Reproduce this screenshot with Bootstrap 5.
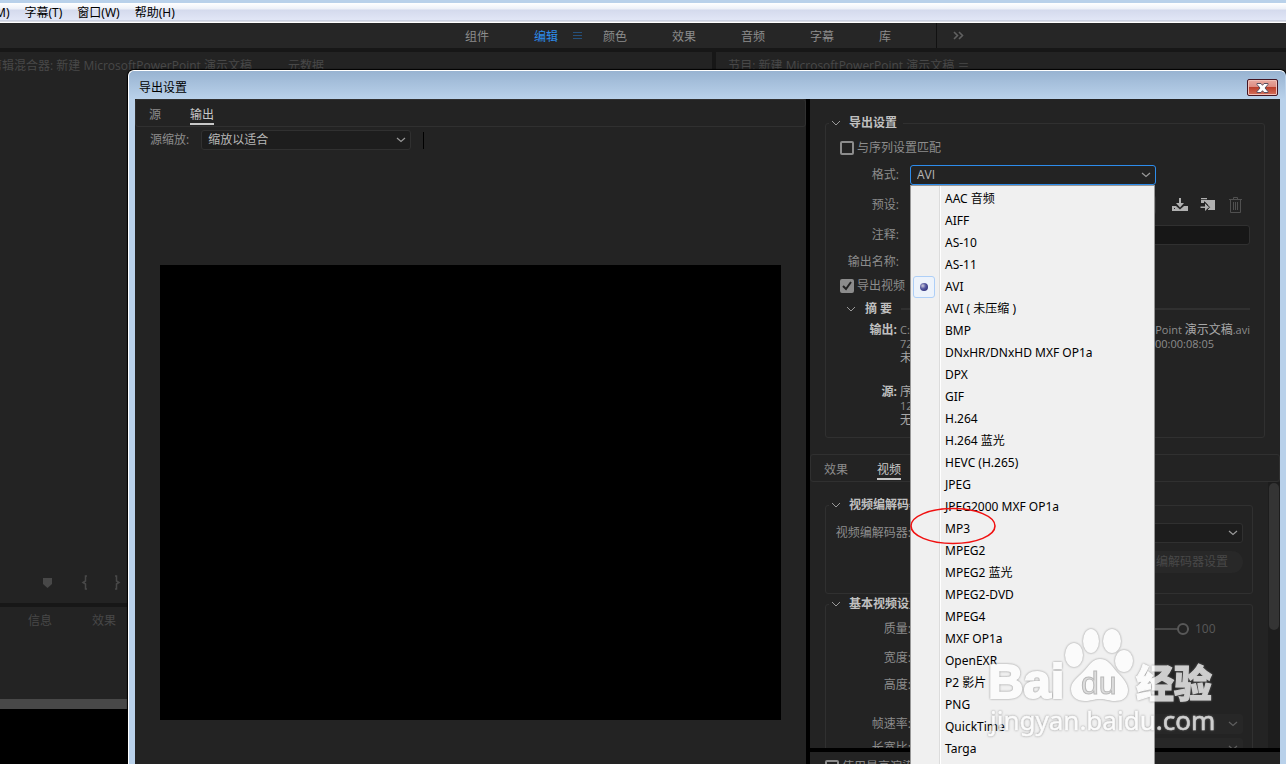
<!DOCTYPE html>
<html lang="zh-CN">
<head>
<meta charset="utf-8">
<meta name="viewport" content="width=device-width, initial-scale=1">
<title>导出设置</title>
<link rel="stylesheet" href="https://cdn.jsdelivr.net/npm/bootstrap@5.3.0/dist/css/bootstrap.min.css">
<style>
  body { background:#171717; color:#8c8c8c; font:12px/20px "Open Sans","Noto Sans CJK SC",sans-serif; height:100vh; overflow:hidden; position:relative; }
  a { color:inherit; text-decoration:none; }
  .sysedge { height:3px; background:#b9d1ea; }
  .menubar { height:20px; background:linear-gradient(#fff 0,#edf0f8 6px,#d4daed 7px,#e1e6f6 17px,#b6bccc 18px,#fff 19px); color:#000; overflow:hidden; font-family:"Noto Sans","Noto Sans CJK SC",sans-serif; }
  .menubar a { margin-right:15px; line-height:20px; }
  .menubar a:first-child { margin-left:-5px; }
  .spaces { height:25px; background:#262626; margin-bottom:4px; }
  .spaces nav { margin-left:36%; padding-left:2px; line-height:27px; gap:45px; }
  .spaces .burger { left:39px; top:8px; }
  .spaces .current { color:#2d8ceb; }
  .spaces .more { border-left:1px solid #111; padding-left:16px; height:25px; }
  .pane { background:#232323; }
  .dim { color:#484848; }
  .uppertabs { padding-top:4px; gap:36px; margin-left:-10px; }
  .lowerpane { height:92px; margin-top:4px; }
  .strip { height:10px; background:#484848; }
  .void { height:55px; background:#000; }
  .export { left:128px; right:0; top:70px; bottom:0; border:1px solid #fff; border-bottom:0; border-right-color:#b9d1ea; border-radius:6px 6px 0 0; background:#b9d1ea linear-gradient(#98b3d1,#b9d1ea 28px); padding:0 5px 0 6px; box-shadow:0 0 1px 1px #000; }
  .caption { height:28px; color:#000; padding:5px 2px 0 4px; }
  .closebox { width:31px; height:17px; border:1px solid #431523; border-radius:2px; background:linear-gradient(#e8aaa0,#dc8a80 48%,#bb402c 50%,#d4705c); box-shadow:inset 0 0 0 1px #f0c0b8; padding:0; }
  .tabrow { height:28px; border:1px solid #303030; border-radius:3px; padding-left:13px; gap:29px; }
  .tabrow a { line-height:24px; height:25px; margin-top:3px; }
  .tabrow .on { color:#c8c8c8; border-bottom:2px solid #c8c8c8; height:22px; }
  .scaling { height:26px; padding-left:15px; gap:12px; }
  .field { background-color:#1d1d1d; border:1px solid #303030; border-radius:3px; color:#b8b8b8; font-size:12px; line-height:18px; height:20px; padding:0 20px 0 6px; min-height:0;
    background-image:url("data:image/svg+xml,%3Csvg xmlns='http://www.w3.org/2000/svg' viewBox='0 0 10 6'%3E%3Cpath d='M1 1l4 3.5L9 1' fill='none' stroke='%23999' stroke-width='1.2'/%3E%3C/svg%3E"); background-size:10px 6px; background-position:right 4px center; background-repeat:no-repeat; }
  .field:disabled { background-color:#2c2c2c; border-color:#2c2c2c; opacity:.5; }
  input.field { background-image:none; background-color:#171717; }
  .wide { width:210px; }
  .divline { width:1px; height:17px; background:#000; }
  .canvas { margin:112px 25px 44px; background:#000; }
  .settings { width:474px; border-left:4px solid #000; }
  fieldset { border:1px solid #303030; border-radius:3px; padding:0 14px 0 0; margin:0 15px; }
  .general { margin-top:14px; }
  legend { float:none; width:auto; margin:0 0 0 3px; padding:0 6px 0 2px; font-size:12px; font-weight:700; line-height:20px; color:#c0c0c0; display:flex; align-items:center; gap:8px; }
  .r18 { height:18px; } .r24 { height:24px; } .r28 { height:28px; } .r30 { height:30px; } .r36 { height:36px; } .r27 { height:27px; }
  .lab { width:73px; text-align:right; flex:none; margin-right:11px; white-space:nowrap; }
  .lab.far { width:85px; margin-right:8px; }
  .tick { appearance:none; width:14px; height:14px; border:2px solid #8c8c8c; border-radius:2px; margin:0 3px 0 14px; flex:none; }
  .tick:checked { background:#8c8c8c url("data:image/svg+xml,%3Csvg xmlns='http://www.w3.org/2000/svg' viewBox='0 0 10 10'%3E%3Cpath d='M1 5l3 3 5-7' fill='none' stroke='%23222' stroke-width='2'/%3E%3C/svg%3E"); }
  .picker { width:246px; }
  .picker .field { background-color:#232323; border-color:#2d8ceb; }
  .picker .calm { border-color:#303030; }
  .formats { top:20px; left:0; width:245px; margin:0; padding:2px 0; background:#f0f0f0 linear-gradient(90deg,transparent 28px,#dcdcdc 28px,#dcdcdc 29px,#fff 29px,#fff 30px,transparent 30px); border:1px solid #979797; border-radius:0; font:12px "Noto Sans","Noto Sans CJK SC",sans-serif; }
  .formats button { height:22px; line-height:22px; padding:0 0 0 34px; color:#000; font-family:"DejaVu Sans Condensed","Noto Sans","Noto Sans CJK SC",sans-serif; font-family:"Noto Sans","Noto Sans CJK SC",sans-serif; }
  .radiobox { left:2px; top:0; width:22px; height:22px; border:1px solid #aecff7; border-radius:3px; background:#edf3fb; }
  .radiobox::after { content:""; position:absolute; left:6px; top:6px; width:8px; height:8px; border-radius:50%; background:radial-gradient(circle at 35% 35%,#ccd 0,#5558a0 40%,#1c1c66 100%); }
  .ring { left:-2px; top:-11px; }
  .tool { padding:0; border:0; background:none; line-height:0; }
  .tools { margin-left:15px; gap:10px; }
  .lines { line-height:14px; color:#8c8c8c; font-size:11px; margin-bottom:20px; }
  .lines .lab { width:71px; margin-right:3px; font-size:12px; font-weight:700; color:#c0c0c0; }
  .lines .tail { width:131px; }
  .lines b { font-weight:400; color:#a8a8a8; font-size:12px; }
  .lines:last-child { margin-bottom:10px; }
  .summary { font-weight:700; color:#c0c0c0; padding-left:20px; gap:9px; }
  .summary i { height:2px; background:#303030; }
  .lowerwrap { min-height:0; overflow:hidden; }
  .forms { padding-top:13px; }
  .forms fieldset { margin:0 15px; padding-right:9px; }
  .codecs { padding-bottom:18px; }
  .track { width:12px; background:#1d1d1d; padding:1px 1px 0; }
  .thumb { height:147px; border-radius:5px; background:#343434; }
  .pill { width:140px; height:22px; border:0; border-radius:11px; background:#282828; color:#484848; padding:0 15px 0 0; text-align:right; white-space:nowrap; }
  .quality { appearance:none; height:14px; background:linear-gradient(#484848,#484848) center/100% 2px no-repeat; min-width:0; flex:1; }
  .quality::-webkit-slider-thumb { appearance:none; width:12px; height:12px; border:2px solid #585858; border-radius:50%; background:#232323; }
  .reading { color:#585858; width:54px; padding-left:6px; }
  .foot { height:12px; border-top:4px solid #000; box-sizing:content-box; overflow:hidden; }
  .foot .tick { margin-left:15px; }
  .brand { right:60px; bottom:20px; z-index:1100; pointer-events:none; opacity:.78; filter:drop-shadow(0 0 1px #777); }
</style>
</head>
<body class="d-flex flex-column m-0">
<div class="sysedge flex-shrink-0"></div>
<nav class="menubar d-flex flex-shrink-0"><a href="#">M)</a><a href="#">字幕(T)</a><a href="#">窗口(W)</a><a href="#">帮助(H)</a></nav>
<header class="spaces flex-shrink-0">
  <nav class="d-flex">
    <a href="#">组件</a>
    <a href="#" class="current position-relative">编辑<svg class="burger position-absolute" width="9" height="9" stroke="#25507c"><path d="M0 1.500h9M0 4.500h9M0 7.500h9"/></svg></a>
    <a href="#">颜色</a><a href="#">效果</a><a href="#">音频</a><a href="#">字幕</a><a href="#">库</a>
    <a href="#" class="more" aria-label="更多"><svg class="d-block mt-2" width="11" height="9" fill="none" stroke="#606060" stroke-width="1.600"><path d="M1 1l3.500 3.500L1 8M6 1l3.500 3.500L6 8"/></svg></a>
  </nav>
</header>
<main class="d-flex flex-grow-1 gap-1">
  <section class="d-flex flex-column flex-grow-1">
    <div class="pane dim flex-grow-1 d-flex flex-column justify-content-between">
      <div class="uppertabs d-flex"><span>剪辑混合器: 新建 MicrosoftPowerPoint 演示文稿</span><span>元数据</span></div>
      <svg class="mb-1" width="127" height="26" fill="#484848"><path d="M43 5h9v6l-4.500 4L43 11z"/><path d="M87 3h-1.500v5L83 9.500l2.500 1.500v5H87M115 3h1.500v5l2.500 1.500-2.500 1.500v5H115" fill="none" stroke="#484848" stroke-width="1.500"/></svg>
    </div>
    <div class="pane lowerpane dim"><div class="d-flex ps-4 pt-1"><span class="ms-1 me-4">信息</span><span class="ms-3">效果</span></div></div>
    <div class="strip"></div><div class="void"></div>
  </section>
  <section class="pane dim px-2 pt-1" style="width:44.3%"><span class="ms-1">节目: 新建 MicrosoftPowerPoint 演示文稿</span> <span>＝</span></section>
</main>

<section class="export position-absolute d-flex flex-column" role="dialog" aria-labelledby="dlg">
  <div class="caption d-flex align-items-center flex-shrink-0"><span id="dlg" class="me-auto">导出设置</span>
    <button type="button" class="closebox d-flex align-items-center justify-content-center" aria-label="关闭"><svg width="13" height="10"><path d="M1 .5h4l1.500 1.800L8 .5h4v1L9 5l3 3.500v1H8L6.500 7.700 5 9.500H1v-1L4 5 1 1.500z" fill="#fff" stroke="#5a5060"/></svg></button>
  </div>
  <div class="d-flex flex-grow-1" style="min-height:0">
    <div class="pane d-flex flex-column flex-grow-1">
      <nav class="tabrow d-flex flex-shrink-0"><a href="#">源</a><a href="#" class="on">输出</a></nav>
      <div class="scaling d-flex align-items-center flex-shrink-0"><label for="scale">源缩放:</label>
        <select id="scale" class="form-select field wide"><option>缩放以适合</option></select><span class="divline"></span></div>
      <div class="canvas flex-grow-1"></div>
    </div>
    <div class="pane settings d-flex flex-column flex-shrink-0">
      <fieldset class="general flex-shrink-0">
        <legend><svg width="10" height="7" fill="none" stroke="#999"><path d="M1 1l4 4 4-4"/></svg>导出设置</legend>
        <div class="r30 d-flex align-items-center"><input class="tick" type="checkbox" id="match"><label for="match">与序列设置匹配</label></div>
        <div class="r24 d-flex align-items-center"><label class="lab" for="fmt">格式:</label>
          <div class="picker position-relative d-flex">
            <select id="fmt" class="form-select field"><option>AVI</option></select>
            <ul class="formats dropdown-menu show">
              <li><button type="button" class="dropdown-item">AAC 音频</button></li>
              <li><button type="button" class="dropdown-item">AIFF</button></li>
              <li><button type="button" class="dropdown-item">AS-10</button></li>
              <li><button type="button" class="dropdown-item">AS-11</button></li>
              <li class="position-relative"><span class="radiobox position-absolute"></span><button type="button" class="dropdown-item">AVI</button></li>
              <li><button type="button" class="dropdown-item">AVI ( 未压缩 )</button></li>
              <li><button type="button" class="dropdown-item">BMP</button></li>
              <li><button type="button" class="dropdown-item">DNxHR/DNxHD MXF OP1a</button></li>
              <li><button type="button" class="dropdown-item">DPX</button></li>
              <li><button type="button" class="dropdown-item">GIF</button></li>
              <li><button type="button" class="dropdown-item">H.264</button></li>
              <li><button type="button" class="dropdown-item">H.264 蓝光</button></li>
              <li><button type="button" class="dropdown-item">HEVC (H.265)</button></li>
              <li><button type="button" class="dropdown-item">JPEG</button></li>
              <li><button type="button" class="dropdown-item">JPEG2000 MXF OP1a</button></li>
              <li class="position-relative"><button type="button" class="dropdown-item">MP3</button><svg class="ring position-absolute" width="88" height="38"><ellipse cx="44" cy="19" rx="42" ry="17.500" fill="none" stroke="#f01010" stroke-width="1.600"/></svg></li>
              <li><button type="button" class="dropdown-item">MPEG2</button></li>
              <li><button type="button" class="dropdown-item">MPEG2 蓝光</button></li>
              <li><button type="button" class="dropdown-item">MPEG2-DVD</button></li>
              <li><button type="button" class="dropdown-item">MPEG4</button></li>
              <li><button type="button" class="dropdown-item">MXF OP1a</button></li>
              <li><button type="button" class="dropdown-item">OpenEXR</button></li>
              <li><button type="button" class="dropdown-item">P2 影片</button></li>
              <li><button type="button" class="dropdown-item">PNG</button></li>
              <li><button type="button" class="dropdown-item">QuickTime</button></li>
              <li><button type="button" class="dropdown-item">Targa</button></li>
              <li><button type="button" class="dropdown-item" aria-label="TIFF"></button></li>
            </ul>
          </div></div>
        <div class="r36 d-flex align-items-center"><label class="lab" for="preset">预设:</label>
          <div class="picker"><select id="preset" class="form-select field calm"><option></option></select></div>
          <div class="tools d-flex">
            <button type="button" class="tool" aria-label="保存预设"><svg width="18" height="16" fill="#b0b0b0"><path d="M8 1h2v5h3L9 10.500 5 6h3zM1 9h4l4 3.500L13 9h4v5H1z"/><path d="M3 11h1v1H3z" fill="#232323"/></svg></button>
            <button type="button" class="tool" aria-label="导入预设"><svg width="18" height="16" fill="#b0b0b0"><path d="M2 1h6v1.300H2zM2 3h14v10H9V8L5 4v2H2z"/><path d="M1.500 9.500h4.500V6L10 10.200 6 14v-3H1.500z" fill="#b0b0b0"/><path d="M5.500 5L10.500 10.200 8 13" fill="none" stroke="#232323"/></svg></button>
            <button type="button" class="tool" aria-label="删除预设" disabled><svg width="18" height="16" fill="none" stroke="#505050"><path d="M2 2.500h13M6.500 2V.5h4V2M3.500 3v12.500h10V3M6.500 5v8M8.500 5v8M10.500 5v8"/></svg></button>
          </div></div>
        <div class="r24 d-flex align-items-center"><label class="lab" for="note">注释:</label><input id="note" class="form-control field" type="text"></div>
        <div class="r30 d-flex align-items-center"><span class="lab">输出名称:</span></div>
        <div class="r18 d-flex align-items-center"><input class="tick" type="checkbox" id="vid" checked><label for="vid">导出视频</label></div>
        <div class="r28 summary d-flex align-items-center"><svg width="10" height="7" fill="none" stroke="#999"><path d="M1 1l4 4 4-4"/></svg>摘 要<i class="flex-grow-1"></i></div>
        <div class="lines d-flex"><span class="lab">输出:</span><div class="flex-grow-1">
          <div class="d-flex justify-content-between"><span>C:</span><span class="tail text-end">Point <b>演示文稿</b>.avi</span></div>
          <div class="d-flex justify-content-between"><span>72</span><span class="tail ps-4"><span class="ms-2 ps-1">00:00:08:05</span></span></div>
          <div><b>未</b></div></div></div>
        <div class="lines d-flex"><span class="lab">源:</span><div><div><b>序</b></div><div>12</div><div><b>无</b></div></div></div>
      </fieldset>
      <nav class="tabrow d-flex flex-shrink-0 mt-3"><a href="#">效果</a><a href="#" class="on">视频</a></nav>
      <div class="lowerwrap d-flex flex-grow-1">
        <div class="forms flex-grow-1">
          <fieldset>
            <legend><svg width="10" height="7" fill="none" stroke="#999"><path d="M1 1l4 4 4-4"/></svg>视频编解码器</legend>
            <div class="codecs">
              <div class="r36 d-flex align-items-center"><label class="lab far" for="codec">视频编解码器:</label><select id="codec" class="form-select field"><option></option></select></div>
              <div class="r24 d-flex justify-content-end"><button type="button" class="pill" disabled>编解码器设置</button></div>
            </div>
          </fieldset>
          <fieldset>
            <legend><svg width="10" height="7" fill="none" stroke="#999"><path d="M1 1l4 4 4-4"/></svg>基本视频设置</legend>
            <div class="r30 d-flex align-items-center"><label class="lab far" for="q">质量:</label><input id="q" class="quality" type="range" value="100"><span class="reading">100</span></div>
            <div class="r27 d-flex align-items-center"><span class="lab far">宽度:</span></div>
            <div class="r27 d-flex align-items-center"><span class="lab far">高度:</span></div>
            <div class="r27 d-flex align-items-center mt-2 pt-2"><label class="lab far" for="fps">帧速率:</label><select id="fps" class="form-select field" disabled><option></option></select></div>
            <div class="r30 d-flex align-items-center"><label class="lab far" for="ord">长宽比:</label><select id="ord" class="form-select field" disabled><option></option></select></div>
          </fieldset>
        </div>
        <div class="track"><div class="thumb"></div></div>
      </div>
      <div class="foot flex-shrink-0"><div class="r30 d-flex align-items-center"><input class="tick" type="checkbox" id="mrq"><label for="mrq">使用最高渲染质量</label></div></div>
    </div>
  </div>
</section>

<svg class="brand position-absolute" width="240" height="120" fill="#fff" aria-label="Baidu 经验">
  <text x="2" y="74" font-family="Liberation Sans" font-size="49" font-weight="700" stroke="#fff" stroke-width="2">Bai</text>
  <ellipse cx="88" cy="31" rx="9" ry="12"/><ellipse cx="105" cy="17" rx="8" ry="12"/><ellipse cx="126" cy="17" rx="9" ry="12"/><ellipse cx="138" cy="37" rx="9" ry="11"/>
  <path d="M114 35c8 0 11 6 17 13 6 6 11 12 11 18 0 8-6 11-13 11-6 0-9-2-15-2s-9 2-15 2c-8 0-14-4-14-12 0-7 6-11 12-17s9-13 17-13z"/>
  <text x="95" y="70" font-family="Liberation Sans" font-size="32" stroke="#aaa" stroke-width="1" fill="#d8d8d8">du</text>
  <text x="150" y="73" font-family="Noto Sans CJK SC" font-size="38" font-weight="900" stroke="#fff">经验</text>
  <text x="4" y="106" font-family="Noto Sans" font-size="26" stroke="#fff" stroke-width=".5">jingyan.baidu.com</text>
</svg>
<script src="https://cdn.jsdelivr.net/npm/bootstrap@5.3.0/dist/js/bootstrap.bundle.min.js"></script>
</body>
</html>
